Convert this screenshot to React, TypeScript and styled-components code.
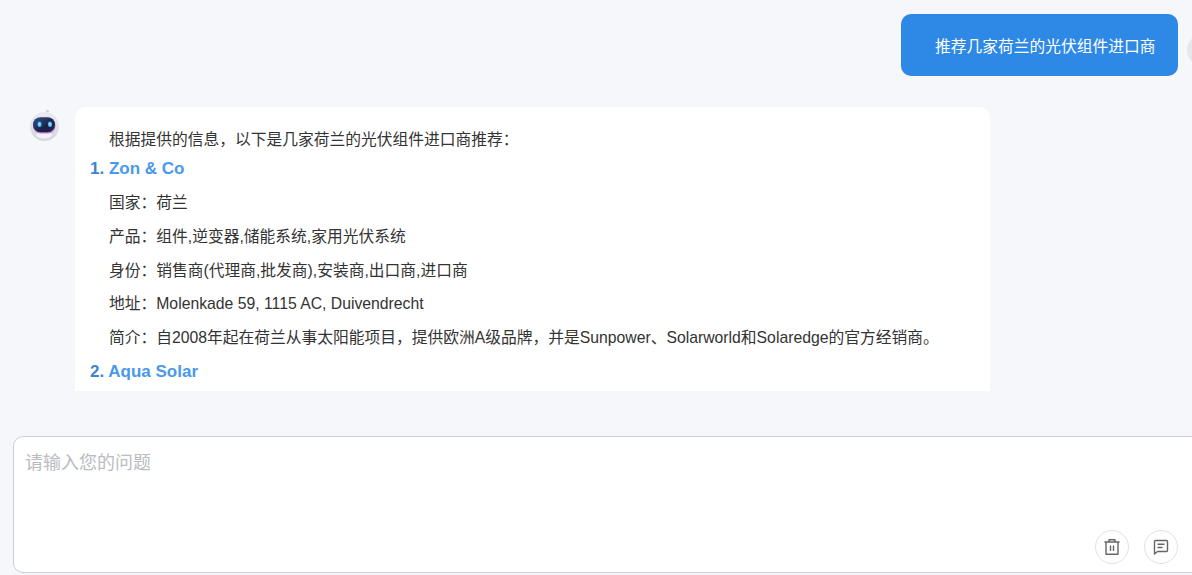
import styled, { createGlobalStyle } from "styled-components";

const GlobalStyle = createGlobalStyle`
  html, body {
    margin: 0;
    padding: 0;
    background: #f5f7fb;
    overflow: hidden;
  }
  * { box-sizing: border-box; }
`;

const Page = styled.div`
  width: 1192px;
  height: 575px;
  display: flex;
  flex-direction: column;
  overflow: hidden;
  font-family: "Liberation Sans", "Noto Sans CJK SC", sans-serif;
`;

const ChatList = styled.div`
  height: 391px;
  overflow: hidden;
  padding-top: 14px;
  flex-shrink: 0;
`;

const UserRow = styled.div`
  display: flex;
  gap: 9px;
  width: 1230px;
  padding-left: 901px;
`;

const UserBubble = styled.div`
  width: 277px;
  height: 62px;
  padding: 0 18px 0 34px;
  display: flex;
  align-items: center;
  background: #2e88e5;
  border-radius: 10px;
  color: #fff;
  font-size: 15.75px;
  white-space: nowrap;
`;

const UserAvatar = styled.div`
  width: 32px;
  height: 32px;
  margin-top: 20px;
  border-radius: 50%;
  background: #e6e7ea;
  flex-shrink: 0;
`;

const BotRow = styled.div`
  display: flex;
  gap: 15px;
  margin-top: 31px;
  padding-left: 29px;
`;

const BotAvatar = styled.svg`
  width: 31px;
  height: 35px;
  flex-shrink: 0;
`;

const BotBubble = styled.div`
  width: 915px;
  padding: 21px 15px 20px;
  background: #fff;
  border-radius: 10px 10px 0 0;
  color: #333;
  font-size: 15.75px;
  line-height: 33.8px;
`;

const Intro = styled.p`
  margin: 0;
  padding-left: 19px;
  line-height: 24px;
`;

const Heading = styled.h3`
  margin: 0;
  font-size: 17px;
  font-weight: 700;
  line-height: 34px;
  color: #4a98ec;
  white-space: nowrap;
`;

const Number = styled.span`
  color: #3c84d2;
`;

const Detail = styled.p`
  margin: 0;
  padding-left: 19px;
  white-space: nowrap;
`;

const Composer = styled.div`
  position: relative;
  width: 1200px;
  height: 137px;
  margin: 45px 0 0 13px;
  padding: 14px 11px;
  background: #fff;
  border: 1px solid #cdced8;
  border-radius: 10px;
  flex-shrink: 0;
`;

const Placeholder = styled.div`
  color: #b9bcc2;
  font-size: 18px;
  line-height: 24px;
`;

const Actions = styled.div`
  position: absolute;
  top: 93px;
  left: 1081px;
  display: flex;
  gap: 15px;
`;

const RoundButton = styled.button`
  width: 34px;
  height: 34px;
  padding: 0;
  display: flex;
  align-items: center;
  justify-content: center;
  background: #fff;
  border: 1px solid #e2e2e6;
  border-radius: 50%;
`;

const Icon = styled.svg`
  width: 18px;
  height: 18px;
  fill: none;
  stroke: #666;
  stroke-width: 1.4;
  stroke-linejoin: round;
`;

const details = [
  "国家：荷兰",
  "产品：组件,逆变器,储能系统,家用光伏系统",
  "身份：销售商(代理商,批发商),安装商,出口商,进口商",
  "地址：Molenkade 59, 1115 AC, Duivendrecht",
  "简介：自2008年起在荷兰从事太阳能项目，提供欧洲A级品牌，并是Sunpower、Solarworld和Solaredge的官方经销商。",
];

export default function App() {
  return (
    <>
      <GlobalStyle />
      <Page>
        <ChatList>
          <UserRow>
            <UserBubble>推荐几家荷兰的光伏组件进口商</UserBubble>
            <UserAvatar />
          </UserRow>
          <BotRow>
            <BotAvatar viewBox="0 0 31 35">
              <defs>
                <linearGradient id="visor" x1="0" y1="0" x2="1" y2="1">
                  <stop offset="0" stopColor="#2f5590" />
                  <stop offset="0.6" stopColor="#1c2146" />
                  <stop offset="1" stopColor="#2a2350" />
                </linearGradient>
                <linearGradient id="shell" x1="0" y1="0" x2="0" y2="1">
                  <stop offset="0" stopColor="#e9ebef" />
                  <stop offset="1" stopColor="#d3d6dc" />
                </linearGradient>
                <radialGradient id="eye">
                  <stop offset="0" stopColor="#a8f0ff" />
                  <stop offset="1" stopColor="#2f9fe0" />
                </radialGradient>
              </defs>
              <circle cx="18.5" cy="4.5" r="1.4" fill="#c9ccd2" />
              <circle cx="15.5" cy="19.5" r="14.5" fill="url(#shell)" />
              <ellipse cx="15" cy="28" rx="8" ry="3.5" fill="#f1f2f5" />
              <rect x="4" y="11" width="22.5" height="15.5" rx="7.7" fill="#c97ad6" />
              <rect x="4" y="10.2" width="22" height="15" rx="7.4" fill="url(#visor)" />
              <ellipse cx="10.5" cy="17.2" rx="2.1" ry="2.8" fill="url(#eye)" />
              <ellipse cx="21" cy="17.2" rx="2.1" ry="2.8" fill="url(#eye)" />
            </BotAvatar>
            <BotBubble>
              <Intro>根据提供的信息，以下是几家荷兰的光伏组件进口商推荐：</Intro>
              <Heading>
                <Number>1. </Number>Zon &amp; Co
              </Heading>
              {details.map((line) => (
                <Detail key={line}>{line}</Detail>
              ))}
              <Heading>
                <Number>2. </Number>Aqua Solar
              </Heading>
            </BotBubble>
          </BotRow>
        </ChatList>
        <Composer>
          <Placeholder>请输入您的问题</Placeholder>
          <Actions>
            <RoundButton aria-label="清空">
              <Icon viewBox="0 0 18 18">
                <path d="M1.5 4h15M6 4V1.8h6V4M3 4v12.2h12V4M7.5 7.5v5.5M10.5 7.5v5.5" />
              </Icon>
            </RoundButton>
            <RoundButton aria-label="发送">
              <Icon viewBox="0 0 18 18">
                <path d="M3.5 2.5h11a1 1 0 0 1 1 1v9a1 1 0 0 1-1 1H5.5l-3 2.5V3.5a1 1 0 0 1 1-1zM5.5 6.2h7M5.5 9.5h5" />
              </Icon>
            </RoundButton>
          </Actions>
        </Composer>
      </Page>
    </>
  );
}
